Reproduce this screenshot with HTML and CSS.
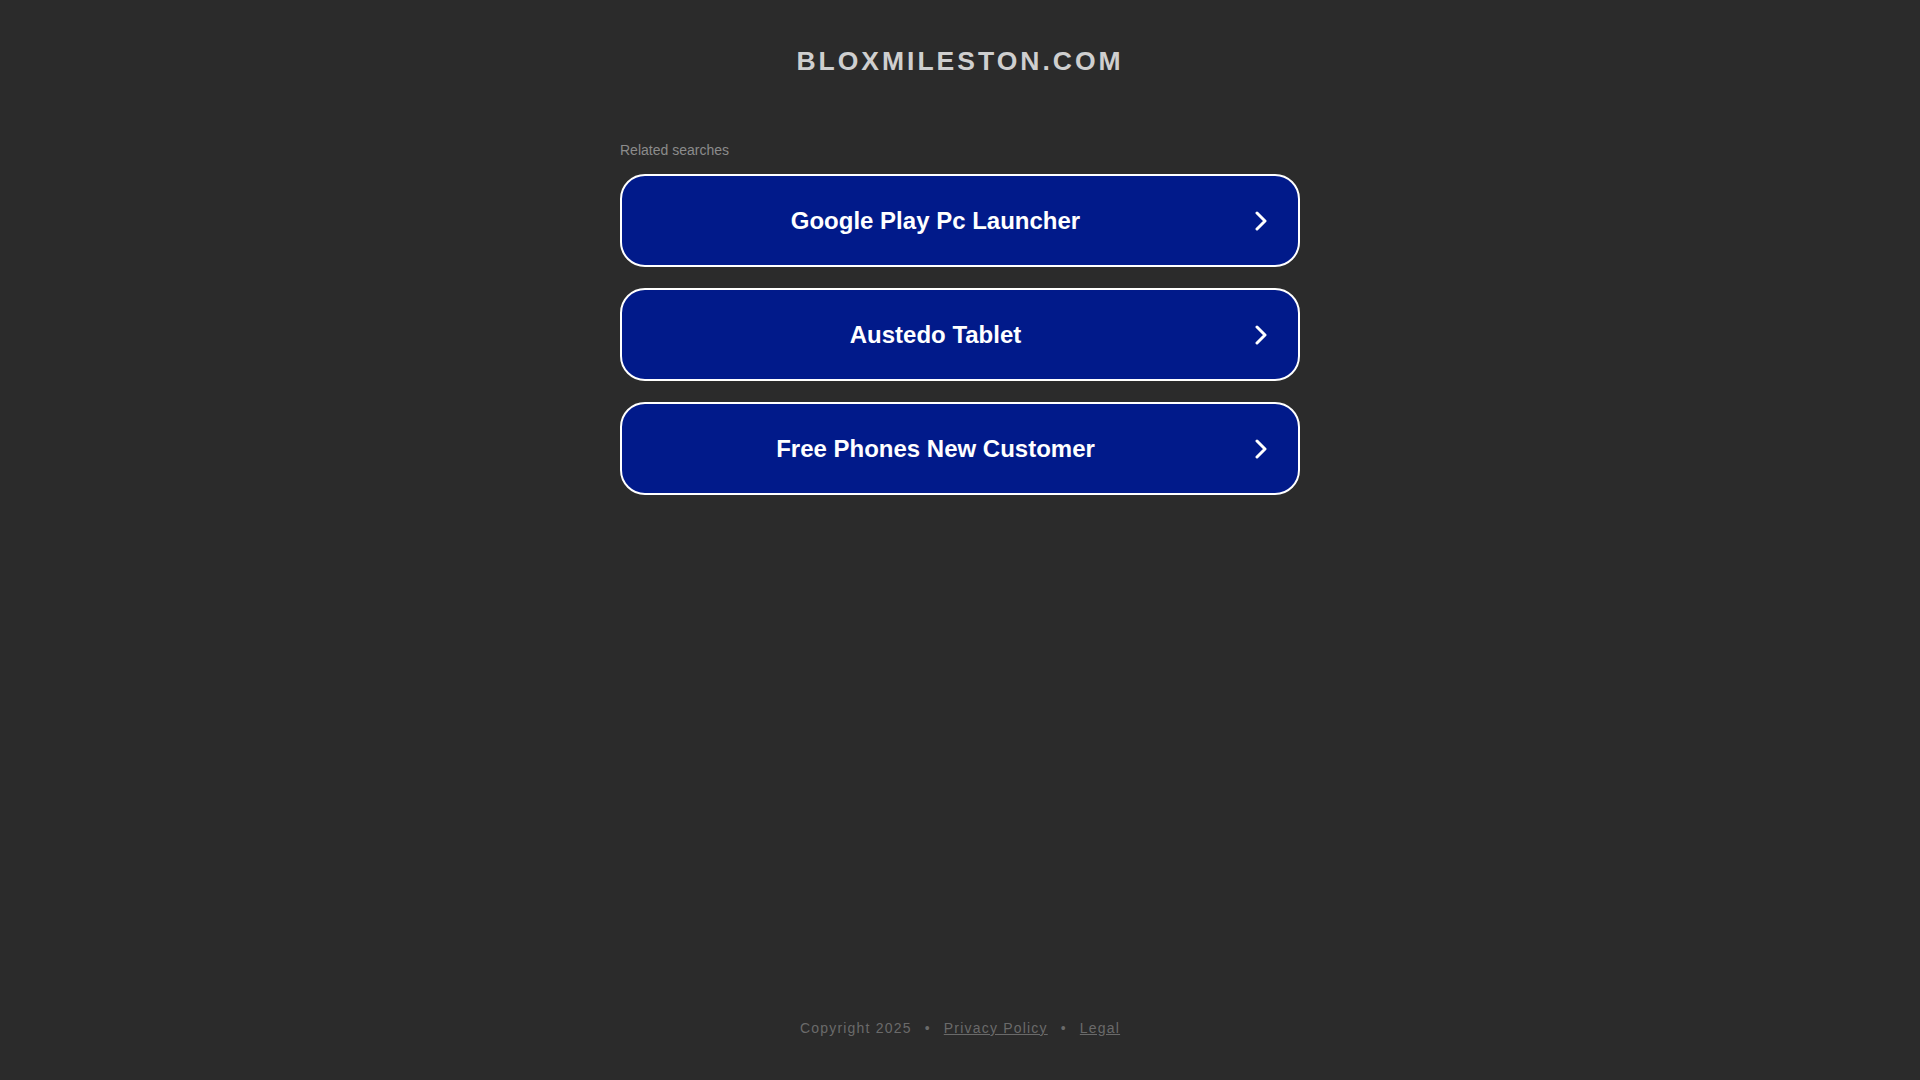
FILE: index.html
```html
<!DOCTYPE html>
<html lang="en">
<head>
<meta charset="utf-8">
<title>bloxmileston.com</title>
<link rel="stylesheet" href="styles.css">
</head>
<body>
<div class="page">
  <header class="header">
    <h1 class="domain">bloxmileston.com</h1>
  </header>
  <main class="content">
    <p class="related">Related searches</p>
    <div class="links">
      <a class="link" href="#"><span class="link-text">Google Play Pc Launcher</span><svg class="chev" viewBox="0 0 12 20" width="12" height="20"><path d="M2 2 L10 10 L2 18" fill="none" stroke="#fff" stroke-width="3" stroke-linecap="round" stroke-linejoin="round"/></svg></a>
      <a class="link" href="#"><span class="link-text">Austedo Tablet</span><svg class="chev" viewBox="0 0 12 20" width="12" height="20"><path d="M2 2 L10 10 L2 18" fill="none" stroke="#fff" stroke-width="3" stroke-linecap="round" stroke-linejoin="round"/></svg></a>
      <a class="link" href="#"><span class="link-text">Free Phones New Customer</span><svg class="chev" viewBox="0 0 12 20" width="12" height="20"><path d="M2 2 L10 10 L2 18" fill="none" stroke="#fff" stroke-width="3" stroke-linecap="round" stroke-linejoin="round"/></svg></a>
    </div>
  </main>
  <footer class="footer">
    <span>Copyright 2025</span>
    <span class="dot">•</span>
    <a href="#" class="flink">Privacy Policy</a>
    <span class="dot">•</span>
    <a href="#" class="flink">Legal</a>
  </footer>
</div>
</body>
</html>
```

FILE: styles.css
```css
html, body {
  margin: 0;
  padding: 0;
  height: 100%;
}
body {
  background: #2b2b2b;
  font-family: "Liberation Sans", Arial, sans-serif;
}
.page {
  display: flex;
  flex-direction: column;
  align-items: center;
  min-height: 100vh;
}
.header {
  padding-top: 46px;
}
.domain {
  margin: 0;
  font-size: 26.5px;
  font-weight: bold;
  letter-spacing: 3px;
  text-transform: uppercase;
  color: #cfcfcf;
  line-height: 30px;
}
.content {
  width: 680px;
  margin-top: 66px;
}
.related {
  margin: 0 0 16px 0;
  font-size: 14px;
  line-height: 16px;
  color: #8c8c8c;
}
.links {
  display: flex;
  flex-direction: column;
  gap: 21px;
}
.link {
  display: flex;
  align-items: center;
  height: 93px;
  box-sizing: border-box;
  border: 2px solid #fff;
  border-radius: 25px;
  background: #011a8a;
  color: #fff;
  text-decoration: none;
  padding: 0 31px 0 14px;
}
.link-text {
  flex: 1;
  text-align: center;
  font-size: 24px;
  font-weight: bold;
}
.chev {
  display: block;
  margin-left: 20px;
}
.footer {
  margin-top: auto;
  margin-bottom: 44px;
  display: flex;
  gap: 13px;
  font-size: 14px;
  letter-spacing: 1.2px;
  color: #6a6a6a;
}
.flink {
  color: #6a6a6a;
  text-decoration: underline;
}
```
